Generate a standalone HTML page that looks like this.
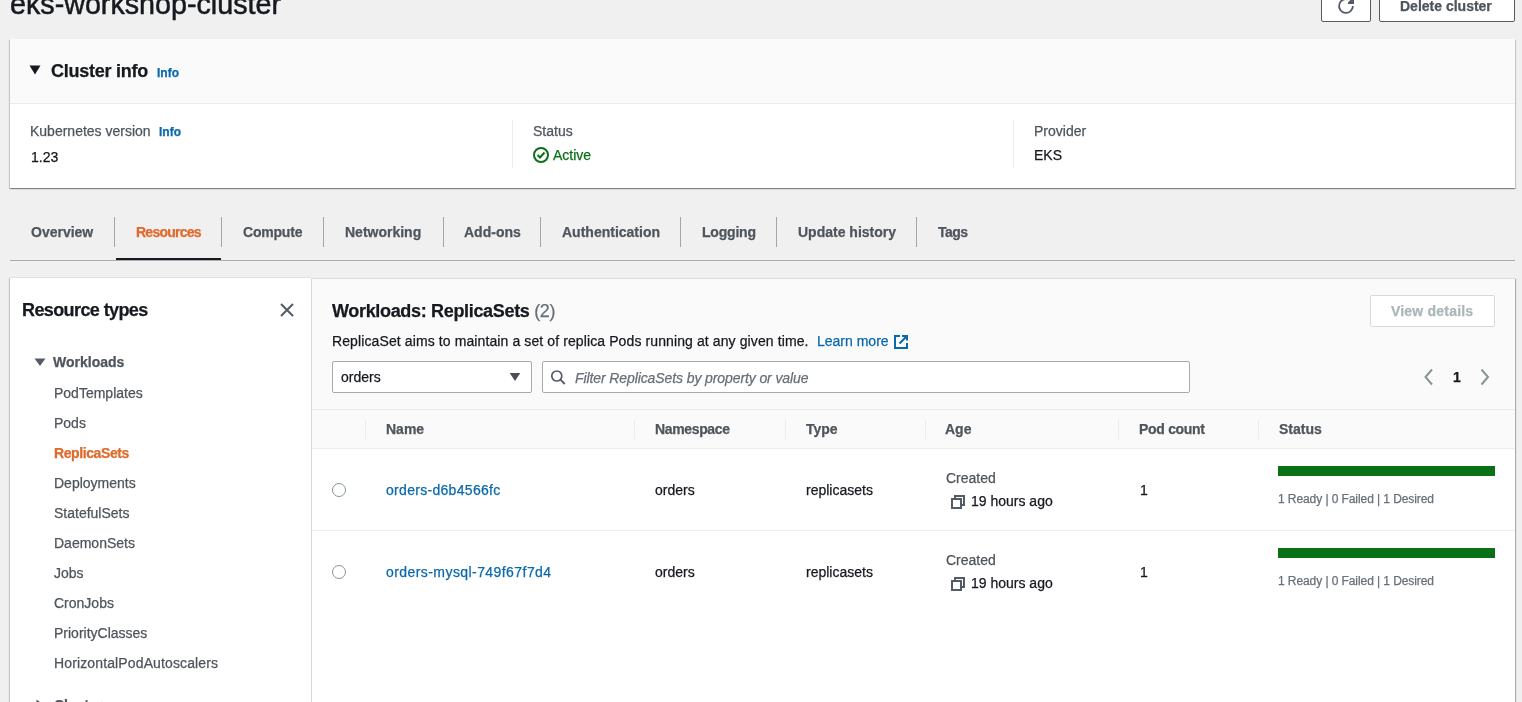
<!DOCTYPE html>
<html><head><meta charset="utf-8">
<style>
html,body{margin:0;padding:0;width:1522px;height:702px;overflow:hidden;background:#f0f0f0;}
body{position:relative;font-family:"Liberation Sans",sans-serif;color:#16191f;-webkit-font-smoothing:antialiased;}
#w{position:absolute;left:0;top:0;width:1522px;height:702px;will-change:transform;}
.a{position:absolute;}
.t{position:absolute;white-space:nowrap;line-height:1;font-size:14px;-webkit-text-stroke:0.25px currentColor;}
.b{font-weight:700;}
.g{color:#4f555c;}
.g2{color:#687078;}
.lk{color:#0a69ad;}
.s12{font-size:12px;}
.s18{font-size:18px;}
.vd{position:absolute;width:1px;background:#eaeded;}
</style></head><body><div id="w">

<!-- Title -->
<div class="t" style="left:10px;top:-10px;font-size:28.7px;-webkit-text-stroke:0.5px currentColor;">eks-workshop-cluster</div>

<!-- Buttons -->
<div class="a" style="left:1321px;top:-10px;width:48px;height:30px;border:1px solid #545b64;border-radius:2px;background:#fff;"></div>
<svg class="a" style="left:1336px;top:-4px" width="20" height="20" viewBox="0 0 20 20"><path d="M16.9 10 A6.9 6.9 0 1 1 12.4 3.5" fill="none" stroke="#545b64" stroke-width="1.8"/><path d="M12 7.9 H18 V0.5 L15.2 3.3 L12 6.2 Z" fill="#545b64"/></svg>
<div class="a" style="left:1379px;top:-10px;width:134px;height:30px;border:1px solid #545b64;border-radius:2px;background:#fff;"></div>
<div class="t b g" style="left:1400px;top:-1px;">Delete cluster</div>

<!-- Cluster info card -->
<div class="a" style="left:10px;top:39px;width:1505px;height:149px;background:#fff;box-shadow:0 1px 1px 0 rgba(0,28,36,.3),1px 1px 1px 0 rgba(0,28,36,.15),-1px 1px 1px 0 rgba(0,28,36,.15);"></div>
<div class="a" style="left:10px;top:39px;width:1505px;height:64px;background:#fafafa;border-bottom:1px solid #eaeded;"></div>
<svg class="a" style="left:29px;top:65px" width="12" height="10" viewBox="0 0 12 10"><path d="M0.5 0.5 H11.5 L6 9.5 Z" fill="#16191f"/></svg>
<div class="t b s18" style="left:51px;top:62px;letter-spacing:-0.25px;">Cluster info</div>
<div class="t b s12 lk" style="left:157px;top:67px;">Info</div>

<div class="t g" style="left:30px;top:124px;">Kubernetes version</div>
<div class="t b s12 lk" style="left:159px;top:126px;">Info</div>
<div class="t" style="left:31px;top:150px;">1.23</div>
<div class="vd" style="left:512px;top:120px;height:48px;"></div>
<div class="t g" style="left:533px;top:124px;">Status</div>
<svg class="a" style="left:532px;top:146px" width="18" height="18" viewBox="0 0 18 18"><circle cx="9" cy="9" r="7" fill="none" stroke="#0a7017" stroke-width="2"/><path d="M5.5 9 L8 11.5 L12.5 6.5" fill="none" stroke="#0a7017" stroke-width="2"/></svg>
<div class="t" style="left:553px;top:148px;color:#0a7017;">Active</div>
<div class="vd" style="left:1013px;top:120px;height:48px;"></div>
<div class="t g" style="left:1034px;top:124px;">Provider</div>
<div class="t" style="left:1034px;top:148px;">EKS</div>

<!-- Tabs -->
<div class="a" style="left:10px;top:260px;width:1505px;height:1px;background:#a9adae;"></div>
<div class="a" style="left:116px;top:258px;width:105px;height:2px;background:#16191f;"></div>
<div class="t b g" style="left:31px;top:225px;">Overview</div>
<div class="a" style="left:114px;top:217px;width:1px;height:30px;background:#a3a7a9;"></div>
<div class="t b" style="left:136px;top:225px;color:#e06a2c;letter-spacing:-0.75px;">Resources</div>
<div class="a" style="left:221px;top:217px;width:1px;height:30px;background:#a3a7a9;"></div>
<div class="t b g" style="left:243px;top:225px;letter-spacing:-0.2px;">Compute</div>
<div class="a" style="left:323px;top:217px;width:1px;height:30px;background:#a3a7a9;"></div>
<div class="t b g" style="left:345px;top:225px;">Networking</div>
<div class="a" style="left:443px;top:217px;width:1px;height:30px;background:#a3a7a9;"></div>
<div class="t b g" style="left:464px;top:225px;">Add-ons</div>
<div class="a" style="left:540px;top:217px;width:1px;height:30px;background:#a3a7a9;"></div>
<div class="t b g" style="left:562px;top:225px;">Authentication</div>
<div class="a" style="left:680px;top:217px;width:1px;height:30px;background:#a3a7a9;"></div>
<div class="t b g" style="left:702px;top:225px;letter-spacing:-0.2px;">Logging</div>
<div class="a" style="left:776px;top:217px;width:1px;height:30px;background:#a3a7a9;"></div>
<div class="t b g" style="left:798px;top:225px;">Update history</div>
<div class="a" style="left:916px;top:217px;width:1px;height:30px;background:#a3a7a9;"></div>
<div class="t b g" style="left:938px;top:225px;letter-spacing:-0.5px;">Tags</div>

<!-- Left panel -->
<div class="a" style="left:10px;top:278px;width:301px;height:440px;background:#fff;box-shadow:-1px 0 1px 0 rgba(0,28,36,.2),0 -1px 1px 0 rgba(0,28,36,.04);"></div>
<div class="t b s18" style="left:22px;top:301px;letter-spacing:-0.6px;">Resource types</div>
<svg class="a" style="left:279px;top:302px" width="16" height="16" viewBox="0 0 16 16"><path d="M2 2 L14 14 M14 2 L2 14" stroke="#545b64" stroke-width="2"/></svg>
<svg class="a" style="left:34px;top:358px" width="12" height="9" viewBox="0 0 12 9"><path d="M0.5 0.5 H11.5 L6 8 Z" fill="#545b64"/></svg>
<div class="t b g" style="left:53px;top:355px;">Workloads</div>
<div class="t g" style="left:54px;top:386px;">PodTemplates</div>
<div class="t g" style="left:54px;top:416px;">Pods</div>
<div class="t b" style="left:54px;top:446px;color:#e06a2c;letter-spacing:-0.4px;">ReplicaSets</div>
<div class="t g" style="left:54px;top:476px;">Deployments</div>
<div class="t g" style="left:54px;top:506px;">StatefulSets</div>
<div class="t g" style="left:54px;top:536px;">DaemonSets</div>
<div class="t g" style="left:54px;top:566px;">Jobs</div>
<div class="t g" style="left:54px;top:596px;">CronJobs</div>
<div class="t g" style="left:54px;top:626px;">PriorityClasses</div>
<div class="t g" style="left:54px;top:656px;letter-spacing:0.13px;">HorizontalPodAutoscalers</div>
<svg class="a" style="left:36px;top:699px" width="9" height="12" viewBox="0 0 9 12"><path d="M0.5 0.5 V11.5 L8 6 Z" fill="#545b64"/></svg>
<div class="t b g" style="left:54px;top:698px;">Cluster</div>

<!-- Right panel -->
<div class="a" style="left:311px;top:279px;width:1204px;height:440px;background:#fff;box-shadow:1px 0 1px 0 rgba(0,28,36,.3),0 -1px 1px 0 rgba(0,28,36,.04);"></div>
<div class="a" style="left:311px;top:279px;width:1204px;height:169px;background:#fafafa;"></div>
<div class="a" style="left:311px;top:278px;width:1px;height:430px;background:#d5dbdb;"></div>
<div class="t b s18" style="left:332px;top:302px;letter-spacing:-0.33px;">Workloads: ReplicaSets <span style="font-weight:400;color:#687078;">(2)</span></div>
<div class="a" style="left:1370px;top:295px;width:123px;height:30px;border:1px solid #d5dbdb;border-radius:2px;background:#fff;"></div>
<div class="t b" style="left:1391px;top:304px;color:#aab7b8;letter-spacing:0.2px;">View details</div>
<div class="t" style="left:332px;top:334px;letter-spacing:0.107px;">ReplicaSet aims to maintain a set of replica Pods running at any given time.</div>
<div class="t lk" style="left:817px;top:334px;">Learn more</div>
<svg class="a" style="left:893px;top:334px" width="16" height="16" viewBox="0 0 16 16"><path d="M7 2 H2 V14 H14 V9" fill="none" stroke="#0a69ad" stroke-width="2"/><path d="M9 2 H14 V6.6 M14 2 L6.5 9.5" fill="none" stroke="#0a69ad" stroke-width="2"/></svg>

<div class="a" style="left:332px;top:361px;width:198px;height:30px;border:1px solid #a7abac;border-radius:2px;background:#fff;"></div>
<div class="t" style="left:341px;top:370px;">orders</div>
<svg class="a" style="left:509px;top:373px" width="12" height="10" viewBox="0 0 12 10"><path d="M0.7 0 H11.3 L6 8 Z" fill="#4a5056"/></svg>
<div class="a" style="left:542px;top:361px;width:646px;height:30px;border:1px solid #a7abac;border-radius:2px;background:#fff;"></div>
<svg class="a" style="left:549px;top:368px" width="18" height="18" viewBox="0 0 18 18"><circle cx="7.8" cy="8" r="5" fill="none" stroke="#545b64" stroke-width="1.7"/><path d="M11.4 11.6 L15.8 16" stroke="#545b64" stroke-width="1.8"/></svg>
<div class="t g2" style="left:575px;top:371px;font-style:italic;letter-spacing:-0.1px;">Filter ReplicaSets by property or value</div>

<svg class="a" style="left:1422px;top:368px" width="14" height="18" viewBox="0 0 14 18"><path d="M10 1.5 L3.5 9 L10 16.5" fill="none" stroke="#879596" stroke-width="2"/></svg>
<div class="t b" style="left:1453px;top:370px;">1</div>
<svg class="a" style="left:1478px;top:368px" width="14" height="18" viewBox="0 0 14 18"><path d="M3.5 1.5 L10 9 L3.5 16.5" fill="none" stroke="#879596" stroke-width="2"/></svg>

<!-- Table -->
<div class="a" style="left:312px;top:409px;width:1203px;height:1px;background:#eaeded;"></div>
<div class="a" style="left:312px;top:448px;width:1203px;height:1px;background:#eaeded;"></div>
<div class="vd" style="left:365px;top:420px;height:19px;"></div>
<div class="vd" style="left:634px;top:420px;height:19px;"></div>
<div class="vd" style="left:785px;top:420px;height:19px;"></div>
<div class="vd" style="left:925px;top:420px;height:19px;"></div>
<div class="vd" style="left:1118px;top:420px;height:19px;"></div>
<div class="vd" style="left:1258px;top:420px;height:19px;"></div>
<div class="t b g" style="left:386px;top:422px;">Name</div>
<div class="t b g" style="left:655px;top:422px;letter-spacing:-0.35px;">Namespace</div>
<div class="t b g" style="left:806px;top:422px;">Type</div>
<div class="t b g" style="left:945px;top:422px;">Age</div>
<div class="t b g" style="left:1139px;top:422px;letter-spacing:-0.3px;">Pod count</div>
<div class="t b g" style="left:1279px;top:422px;">Status</div>

<div class="a" style="left:312px;top:530px;width:1203px;height:1px;background:#eaeded;"></div>

<!-- row 1 -->
<div class="a" style="left:332px;top:483px;width:12px;height:12px;border:1px solid #879596;border-radius:50%;background:#fff;"></div>
<div class="t lk" style="left:386px;top:483px;letter-spacing:0.3px;">orders-d6b4566fc</div>
<div class="t" style="left:655px;top:483px;">orders</div>
<div class="t" style="left:806px;top:483px;">replicasets</div>
<div class="t g" style="left:946px;top:471px;">Created</div>
<svg class="a" style="left:950px;top:494px" width="16" height="16" viewBox="0 0 16 16"><path d="M5 5 V2 H14 V11 H11" fill="none" stroke="#545b64" stroke-width="2"/><rect x="2" y="5" width="9" height="9" fill="none" stroke="#545b64" stroke-width="2"/></svg>
<div class="t" style="left:971px;top:494px;">19 hours ago</div>
<div class="t" style="left:1140px;top:483px;">1</div>
<div class="a" style="left:1278px;top:466px;width:217px;height:10px;background:#0a7017;"></div>
<div class="t s12 g2" style="letter-spacing:-0.08px;left:1278px;top:493px;">1 Ready | 0 Failed | 1 Desired</div>

<!-- row 2 -->
<div class="a" style="left:332px;top:565px;width:12px;height:12px;border:1px solid #879596;border-radius:50%;background:#fff;"></div>
<div class="t lk" style="left:386px;top:565px;letter-spacing:0.43px;">orders-mysql-749f67f7d4</div>
<div class="t" style="left:655px;top:565px;">orders</div>
<div class="t" style="left:806px;top:565px;">replicasets</div>
<div class="t g" style="left:946px;top:553px;">Created</div>
<svg class="a" style="left:950px;top:576px" width="16" height="16" viewBox="0 0 16 16"><path d="M5 5 V2 H14 V11 H11" fill="none" stroke="#545b64" stroke-width="2"/><rect x="2" y="5" width="9" height="9" fill="none" stroke="#545b64" stroke-width="2"/></svg>
<div class="t" style="left:971px;top:576px;">19 hours ago</div>
<div class="t" style="left:1140px;top:565px;">1</div>
<div class="a" style="left:1278px;top:548px;width:217px;height:10px;background:#0a7017;"></div>
<div class="t s12 g2" style="letter-spacing:-0.08px;left:1278px;top:575px;">1 Ready | 0 Failed | 1 Desired</div>

</div></body></html>
